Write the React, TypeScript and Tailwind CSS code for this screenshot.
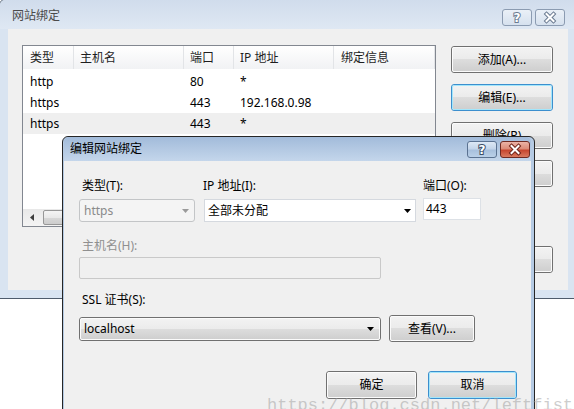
import React from 'react';

const UI_FONT = "font-['Noto_Sans','Noto_Sans_CJK_SC',sans-serif]";

interface BindingRow {
  type: string;
  host: string;
  port: string;
  ip: string;
  info: string;
}

const BINDINGS: BindingRow[] = [
  { type: 'http', host: '', port: '80', ip: '*', info: '' },
  { type: 'https', host: '', port: '443', ip: '192.168.0.98', info: '' },
  { type: 'https', host: '', port: '443', ip: '*', info: '' },
];

const COLUMNS = [
  { title: '类型', width: 'w-[51px] pl-[7px]' },
  { title: '主机名', width: 'w-[110px] pl-[6px]' },
  { title: '端口', width: 'w-[50px] pl-[6px]' },
  { title: 'IP 地址', width: 'w-[100px] pl-[6px]' },
  { title: '绑定信息', width: 'flex-1 pl-[7px]' },
];

function WinButton({ label, focused, className = '' }: { label: string; focused?: boolean; className?: string }) {
  return (
    <div className={`rounded-[3px] border ${focused ? 'border-[#3c8fce]' : 'border-[#707070]'} ${className}`}>
      <div
        className={`flex h-full items-center justify-center whitespace-nowrap rounded-[2px] border bg-[linear-gradient(#f2f2f2_0%,#ebebeb_50%,#dddddd_50%,#cfcfcf_100%)] text-[12px] text-black ${
          focused ? 'border-[#a3e6fb]' : 'border-[#fbfbfb]'
        }`}
      >
        {label}
      </div>
    </div>
  );
}

function Arrow({ color = '#000' }: { color?: string }) {
  return (
    <svg width="7" height="4" viewBox="0 0 7 4" className="shrink-0">
      <polygon points="0,0 7,0 3.5,4" fill={color} />
    </svg>
  );
}

function TitleButton({ kind, active, h }: { kind: 'help' | 'close'; active?: boolean; h: string }) {
  let skin = 'border-[#8b9bb1] bg-[linear-gradient(#eaf0f7,#d6e1ee)]';
  if (active && kind === 'help') skin = 'border-[#5b7291] bg-[linear-gradient(#dde8f5_0%,#c4d5ea_45%,#a8c0dd_55%,#bad0e8_100%)]';
  if (active && kind === 'close') skin = 'border-[#6f2a22] bg-[linear-gradient(#ebb3a6_0%,#dc8b78_45%,#c7462f_55%,#d97a60_100%)]';
  const outline = active ? (kind === 'close' ? '#6e2319' : '#3b4d66') : '#6b7b91';

  return (
    <div className={`flex w-[30px] items-center justify-center rounded-[3px] border ${skin} ${h}`}>
      <svg width="14" height="13" viewBox="0 0 14 13" overflow="visible">
        {kind === 'close' ? (
          <g strokeLinecap="square">
            <path d="M3.5 3 L10.5 10 M10.5 3 L3.5 10" stroke={outline} strokeWidth="4" />
            <path d="M3.5 3 L10.5 10 M10.5 3 L3.5 10" stroke="#fff" strokeWidth="2" />
          </g>
        ) : (
          <text
            x="7"
            y="11"
            textAnchor="middle"
            fontSize="12"
            fontWeight="700"
            fontFamily="DejaVu Sans, sans-serif"
            fill="#fff"
            stroke={outline}
            strokeWidth="2"
            paintOrder="stroke"
          >
            ?
          </text>
        )}
      </svg>
    </div>
  );
}

function ListBox() {
  return (
    <div className="flex h-[182px] w-[414px] flex-col border border-[#828790] bg-white">
      {/* column header */}
      <div className="flex h-[23px] shrink-0 bg-[linear-gradient(#ffffff,#f1f2f4)]">
        {COLUMNS.map((col) => (
          <div key={col.title} className={`flex items-center border-r border-[#e2e4e7] text-[12px] text-[#1e1e1e] ${col.width}`}>
            {col.title}
          </div>
        ))}
      </div>

      <div className="pt-[2px]">
        {BINDINGS.map((row, i) => (
          <div key={i} className={`flex h-[21px] items-center text-[12px] text-black ${i === 2 ? 'bg-[#efefef]' : ''}`}>
            <div className={COLUMNS[0].width}>{row.type}</div>
            <div className={COLUMNS[1].width}>{row.host}</div>
            <div className={COLUMNS[2].width}>{row.port}</div>
            <div className={COLUMNS[3].width}>{row.ip}</div>
            <div className={COLUMNS[4].width}>{row.info}</div>
          </div>
        ))}
      </div>

      {/* horizontal scrollbar */}
      <div className="mt-auto flex h-[17px] shrink-0 items-center bg-[linear-gradient(#e8e8e8,#f4f4f4)]">
        <div className="flex w-[17px] items-center justify-center">
          <svg width="4" height="7" viewBox="0 0 4 7">
            <polygon points="4,0 4,7 0,3.5" fill="#3d3d3d" />
          </svg>
        </div>
        <div className="ml-[3px] h-[15px] w-[220px] rounded-[2px] border border-[#979797] bg-[linear-gradient(#f4f4f4_0%,#e9e9e9_50%,#d8d8d8_50%,#cdcdcd_100%)]" />
      </div>
    </div>
  );
}

function OuterWindow() {
  return (
    <div className="absolute left-[-1px] top-[-1px] flex h-[300px] w-[582px] flex-col rounded-t-[6px] border border-[#4e5b6b] bg-[#d9e4f1]">
      <div className="flex h-[29px] shrink-0 items-start rounded-t-[5px] bg-[linear-gradient(#d0dcec,#dfe8f3)]">
        <span className="ml-[12px] mt-[8px] text-[12px] leading-[16px] text-[#4a4a4a]">网站绑定</span>
        <div className="ml-auto mr-[15px] mt-[9px] flex gap-[3px]">
          <TitleButton kind="help" h="h-[17px]" />
          <TitleButton kind="close" h="h-[17px]" />
        </div>
      </div>

      <div className="ml-[8px] mr-[12px] flex h-[261px] bg-[#f0f0f0] pl-[14px] pt-[16px]">
        <ListBox />
        <div className="ml-[15px] flex w-[102px] flex-col pt-[1px]">
          <WinButton label="添加(A)..." className="h-[27px]" />
          <WinButton label="编辑(E)..." focused className="mt-[11px] h-[27px]" />
          <WinButton label="删除(R)" className="mt-[11px] h-[27px]" />
          <WinButton label="浏览(B)" className="mt-[11px] h-[27px]" />
          <WinButton label="关闭(C)" className="mt-[59px] h-[27px]" />
        </div>
      </div>
    </div>
  );
}

function InnerWindow() {
  return (
    <div className="absolute left-[62px] top-[136px] flex h-[300px] w-[473px] flex-col rounded-t-[6px] border border-[#262626] bg-[#b5cae3] pl-px pr-[3px]">
      <div className="flex h-[24px] shrink-0 items-start rounded-t-[5px] bg-[linear-gradient(#a2bbda,#c4d6eb)]">
        <span className="ml-[6px] mt-[4px] text-[12px] leading-[16px] text-black">编辑网站绑定</span>
        <div className="ml-auto mr-[1px] mt-[4px] flex gap-[3px]">
          <TitleButton kind="help" active h="h-[17px]" />
          <TitleButton kind="close" active h="h-[17px]" />
        </div>
      </div>

      <div className="flex flex-1 flex-col bg-[#f0f0f0] pl-[15px] pt-[17px] text-[12px] leading-[16px] text-black">
        <div className="flex">
          <div className="flex w-[116px] flex-col">
            <span className="pl-[3px]">类型(T):</span>
            <div className="mt-[5px] flex h-[23px] items-center rounded-[3px] border border-[#c3c5c7] bg-[#f4f4f4] pl-[4px] pr-[5px] text-[#8a8a8a]">
              <span className="flex-1">https</span>
              <Arrow color="#9a9a9a" />
            </div>
          </div>
          <div className="ml-[9px] flex w-[212px] flex-col">
            <span className="ml-[-1px]">IP 地址(I):</span>
            <div className="mt-[5px] flex h-[23px] items-center border border-[#d5d9df] bg-white pl-[3px] pr-[4px]">
              <span className="flex-1">全部未分配</span>
              <Arrow />
            </div>
          </div>
          <div className="ml-[7px] flex w-[58px] flex-col">
            <span>端口(O):</span>
            <div className="mt-[4px] flex h-[22px] items-center border border-[#dde1e6] bg-white pl-[2px]">443</div>
          </div>
        </div>

        <span className="mt-[16px] pl-[3px] text-[#8f8f8f]">主机名(H):</span>
        <div className="mt-[3px] h-[22px] w-[302px] rounded-[2px] border border-[#c9c9c9] bg-[#f0f0f0]" />

        <span className="mt-[13px] pl-[3px]">SSL 证书(S):</span>
        <div className="mt-[7px] flex items-center">
          <div className="h-[24px] w-[302px] rounded-[3px] border border-[#707070]">
            <div className="flex h-full items-center rounded-[2px] border border-[#fbfbfb] bg-[linear-gradient(#f2f2f2_0%,#ebebeb_50%,#dddddd_50%,#cfcfcf_100%)] pl-[3px] pr-[5px]">
              <span className="flex-1">localhost</span>
              <Arrow />
            </div>
          </div>
          <WinButton label="查看(V)..." className="ml-[8px] h-[27px] w-[86px]" />
        </div>

        <div className="mt-[29px] flex justify-end gap-[11px] pr-[14px]">
          <WinButton label="确定" className="h-[28px] w-[91px]" />
          <WinButton label="取消" focused className="h-[28px] w-[89px]" />
        </div>
      </div>
    </div>
  );
}

export default function App() {
  return (
    <div className={`relative h-[409px] w-[574px] overflow-hidden bg-white ${UI_FONT}`}>
      <OuterWindow />
      <InnerWindow />
      {/* blog watermark */}
      <div className="pointer-events-none absolute left-[267px] top-[397px] whitespace-nowrap font-['Liberation_Mono',monospace] text-[17px] leading-none text-[#9c9c9c]/50">
        https://blog.csdn.net/leftfist
      </div>
    </div>
  );
}
